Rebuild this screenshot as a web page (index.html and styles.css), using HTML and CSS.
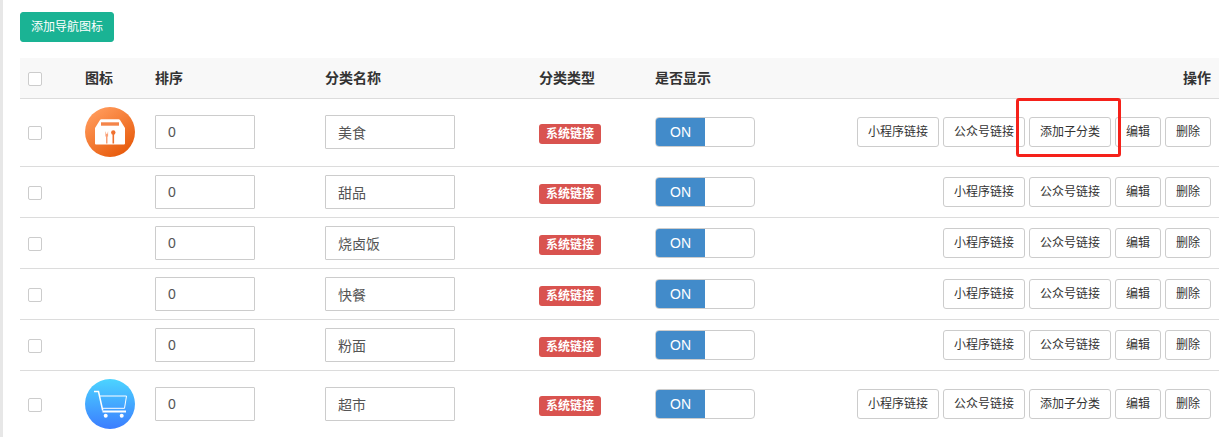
FILE: index.html
```html
<!DOCTYPE html>
<html lang="zh-CN">
<head>
<meta charset="utf-8">
<title>导航图标</title>
<link rel="stylesheet" href="styles.css">
</head>
<body>
<div class="page">
  <button class="btn-add">添加导航图标</button>
  <table class="nav-table">
    <colgroup>
      <col class="c-check"><col class="c-icon"><col class="c-sort"><col class="c-name"><col class="c-type"><col class="c-show"><col class="c-actions">
    </colgroup>
    <thead>
      <tr><th><span class="check"></span></th><th>图标</th><th>排序</th><th>分类名称</th><th>分类类型</th><th>是否显示</th><th class="right">操作</th></tr>
    </thead>
    <tbody>
      <tr class="has-icon">
        <td><span class="check"></span></td>
        <td>
          <svg class="icon" width="50" height="50" viewBox="0 0 50 50">
            <defs><linearGradient id="og" x1="0.2" y1="0.1" x2="0.8" y2="0.95"><stop offset="0" stop-color="#ff9858"/><stop offset="1" stop-color="#e75a0b"/></linearGradient></defs>
            <circle cx="25" cy="25" r="25" fill="url(#og)"/>
            <path d="M15 13a1.500 1.500 0 0 1 1.300-.8h17.400a1.500 1.500 0 0 1 1.300.8l5 8v15.500a1 1 0 0 1-1 1H11a1 1 0 0 1-1-1V21z" fill="#fff"/>
            <rect x="16" y="15.300" width="18" height="3.400" fill="#f4854a"/>
            <path d="M20.400 24v5.500H21v7h1.500v-7h.6V24l-.9 3h-.8z" fill="#f9a077"/>
            <circle cx="28.300" cy="25.500" r="2.200" fill="#f0702e"/>
            <rect x="27.500" y="26" width="1.600" height="10.500" fill="#f0702e"/>
          </svg>
        </td>
        <td><input class="field sort" value="0"></td>
        <td><input class="field name" value="美食"></td>
        <td><span class="tag">系统链接</span></td>
        <td><span class="switch"><span class="on">ON</span></span></td>
        <td><div class="actions"><button class="btn">小程序链接</button><button class="btn">公众号链接</button><button class="btn">添加子分类</button><button class="btn">编辑</button><button class="btn">删除</button></div></td>
      </tr>
      <tr>
        <td><span class="check"></span></td><td></td>
        <td><input class="field sort" value="0"></td>
        <td><input class="field name" value="甜品"></td>
        <td><span class="tag">系统链接</span></td>
        <td><span class="switch"><span class="on">ON</span></span></td>
        <td><div class="actions"><button class="btn">小程序链接</button><button class="btn">公众号链接</button><button class="btn">编辑</button><button class="btn">删除</button></div></td>
      </tr>
      <tr>
        <td><span class="check"></span></td><td></td>
        <td><input class="field sort" value="0"></td>
        <td><input class="field name" value="烧卤饭"></td>
        <td><span class="tag">系统链接</span></td>
        <td><span class="switch"><span class="on">ON</span></span></td>
        <td><div class="actions"><button class="btn">小程序链接</button><button class="btn">公众号链接</button><button class="btn">编辑</button><button class="btn">删除</button></div></td>
      </tr>
      <tr>
        <td><span class="check"></span></td><td></td>
        <td><input class="field sort" value="0"></td>
        <td><input class="field name" value="快餐"></td>
        <td><span class="tag">系统链接</span></td>
        <td><span class="switch"><span class="on">ON</span></span></td>
        <td><div class="actions"><button class="btn">小程序链接</button><button class="btn">公众号链接</button><button class="btn">编辑</button><button class="btn">删除</button></div></td>
      </tr>
      <tr>
        <td><span class="check"></span></td><td></td>
        <td><input class="field sort" value="0"></td>
        <td><input class="field name" value="粉面"></td>
        <td><span class="tag">系统链接</span></td>
        <td><span class="switch"><span class="on">ON</span></span></td>
        <td><div class="actions"><button class="btn">小程序链接</button><button class="btn">公众号链接</button><button class="btn">编辑</button><button class="btn">删除</button></div></td>
      </tr>
      <tr class="has-icon">
        <td><span class="check"></span></td>
        <td>
          <svg class="icon" width="50" height="50" viewBox="0 0 50 50">
            <defs><linearGradient id="bg" x1="0.5" y1="0" x2="0.5" y2="1"><stop offset="0" stop-color="#4cd4ff"/><stop offset="1" stop-color="#3b7dff"/></linearGradient></defs>
            <circle cx="25" cy="25" r="25" fill="url(#bg)"/>
            <path d="M9 12.500h4.500l4.200 19" fill="none" stroke="#fff" stroke-width="1.500"/>
            <path d="M14.500 17h27l-2 12.300H17.500" fill="none" stroke="#fff" stroke-width="1"/>
            <rect x="17.500" y="31.500" width="23.500" height="2" fill="#fff"/>
            <circle cx="20.700" cy="36.800" r="2" fill="#fff"/>
            <circle cx="36.700" cy="36.800" r="2" fill="#fff"/>
          </svg>
        </td>
        <td><input class="field sort" value="0"></td>
        <td><input class="field name" value="超市"></td>
        <td><span class="tag">系统链接</span></td>
        <td><span class="switch"><span class="on">ON</span></span></td>
        <td><div class="actions"><button class="btn">小程序链接</button><button class="btn">公众号链接</button><button class="btn">添加子分类</button><button class="btn">编辑</button><button class="btn">删除</button></div></td>
      </tr>
    </tbody>
  </table>
  <div class="highlight"></div>
</div>
</body>
</html>
```
FILE: styles.css
```css
* { box-sizing: border-box; }
html, body {
  margin: 0;
  height: 437px;
  overflow: hidden;
  background: #fff;
}
body {
  font-family: "Liberation Sans", "Noto Sans CJK SC", sans-serif;
  font-size: 14px;
  color: #676a6c;
}
.page {
  position: relative;
  height: 437px;
  padding: 12px 11px 0 17px;
  border-left: 3px solid #e7e7e7;
}
button, input {
  font-family: inherit;
}
.btn-add {
  display: block;
  height: 30px;
  width: 94px;
  padding: 0;
  margin-bottom: 16px;
  border: 1px solid #1ab394;
  border-radius: 3px;
  background: #1ab394;
  color: #fff;
  font-size: 12px;
  line-height: 1;
}
.nav-table {
  width: 1199px;
  table-layout: fixed;
  border-collapse: separate;
  border-spacing: 0;
}
.c-check { width: 57px; }
.c-icon { width: 70px; }
.c-sort { width: 170px; }
.c-name { width: 214px; }
.c-type { width: 116px; }
.c-show { width: 120px; }
.nav-table th {
  height: 41px;
  padding: 0 8px;
  text-align: left;
  font-size: 14px;
  line-height: 20px;
  font-weight: 700;
  color: #333;
  background: #f8f8f8;
  border-bottom: 1px solid #dcdcdc;
  vertical-align: middle;
}
.nav-table th.right { text-align: right; }
.nav-table td {
  padding: 8px;
  border-bottom: 1px solid #dcdcdc;
  vertical-align: middle;
}
.nav-table .has-icon td { padding-bottom: 9px; }
.check {
  display: block;
  width: 14px;
  height: 14px;
  margin-top: 1px;
  background: #fff;
  border: 1px solid #ccc;
  border-radius: 2px;
}
.icon { display: block; }
.field {
  display: block;
  height: 34px;
  padding: 6px 12px;
  border: 1px solid #ccc;
  border-radius: 1px;
  background: #fff;
  color: #555;
  font-size: 14px;
  outline: none;
}
.sort { width: 100px; }
.name { width: 130px; }
.tag {
  display: block;
  height: 20px;
  width: 62px;
  margin-top: 4px;
  line-height: 20px;
  text-align: center;
  background: #d9534f;
  color: #fff;
  font-size: 12px;
  font-weight: 700;
  border-radius: 3px;
}
.switch {
  display: block;
  width: 100px;
  height: 30px;
  border: 1px solid #ccc;
  border-radius: 4px;
  overflow: hidden;
  background: #fff;
}
.on {
  display: block;
  width: 49px;
  height: 28px;
  line-height: 28px;
  text-align: center;
  background: #428bca;
  color: #fff;
  font-size: 14px;
}
.actions {
  display: flex;
  justify-content: flex-end;
  gap: 4px;
}
.btn {
  height: 30px;
  padding: 0 10px;
  border: 1px solid #ccc;
  border-radius: 3px;
  background: #fff;
  color: #333;
  font-size: 12px;
  line-height: 1;
  white-space: nowrap;
}
.highlight {
  position: absolute;
  left: 1013px;
  top: 98px;
  width: 105px;
  height: 59px;
  border: 3px solid #f5211a;
  border-radius: 3px;
  pointer-events: none;
}
```
